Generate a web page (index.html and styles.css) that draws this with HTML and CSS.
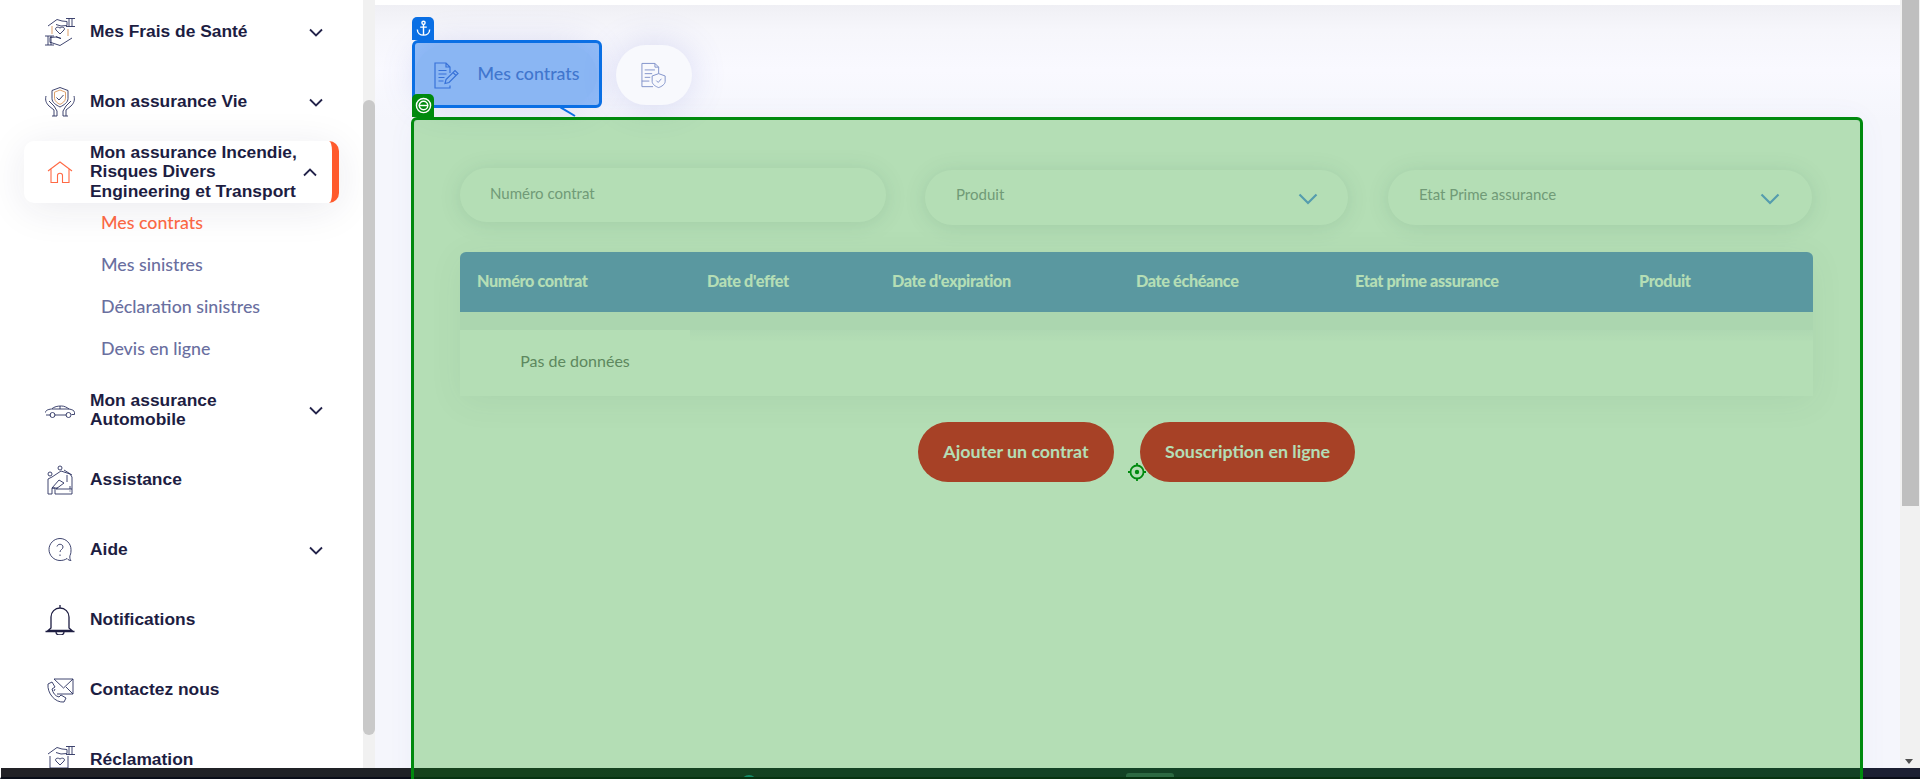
FILE: index.html
```html
<!DOCTYPE html>
<html lang="fr">
<head>
<meta charset="utf-8">
<title>Mes contrats</title>
<link rel="stylesheet" href="styles.css">
</head>
<body>
<div class="app">
  <div class="shell">
    <aside class="sidebar">
      <nav class="nav">
        <a class="item">
          <svg class="ico" viewBox="0 0 30 30"><path d="M3 9 12 2.500l5 1.500 5 .5v4l-6 .5-5-1.500M24 1.500v8M27 1.500v8M21 1.500h9M21 9.500h9" class="ln"/><path d="M27 21l-12 7.500-9-3-1 0v-5l6-.5 5 1.500-5-2M6 19v9M3 19v9M0 19h9M0 28h9" class="ln"/><path d="M15 17l-4-4c-1.500-2 1-4 4-2 3-2 5.500 0 4 2z" class="ln"/><path d="M7 9v8M23 12v7" class="acc"/></svg>
          <span class="label">Mes Frais de Santé</span>
          <svg class="chev" viewBox="0 0 14 9"><path d="M1 1.500 7 7.500 13 1.500"/></svg>
        </a>
        <a class="item">
          <svg class="ico" viewBox="0 0 30 30"><path d="M15 .5 23 3.500v8c0 4-4 6.500-8 8.500-4-2-8-4.500-8-8.500v-8z" class="ln"/><path d="M15 3 20.500 5.200v6c0 3-3 5-5.500 6.200-2.500-1.200-5.500-3.200-5.500-6.200v-6z" class="acc"/><path d="M11.500 10.500 14 13l4.500-5M1 9c-1 4 0 7 3 10l5 4v6M29 9c1 4 0 7-3 10l-5 4v6M4 14l5 5 3 5v5H7M26 14l-5 5-3 5v5h5" class="ln"/></svg>
          <span class="label">Mon assurance Vie</span>
          <svg class="chev" viewBox="0 0 14 9"><path d="M1 1.500 7 7.500 13 1.500"/></svg>
        </a>
        <a class="item item-active">
          <svg class="ico" viewBox="0 0 30 30"><path d="M3 14 15 5 27 14M6 12v13.500h6.500V18.500c0-3 5-3 5 0v7H24V12" class="home"/></svg>
          <span class="label">Mon assurance Incendie,<br>Risques Divers<br>Engineering et Transport</span>
          <svg class="chev" viewBox="0 0 14 9"><path d="M1 7.500 7 1.500 13 7.500"/></svg>
        </a>
        <div class="sub">
          <a class="sub-link sub-link-active">Mes contrats</a>
          <a class="sub-link">Mes sinistres</a>
          <a class="sub-link">Déclaration sinistres</a>
          <a class="sub-link">Devis en ligne</a>
        </div>
        <a class="item">
          <svg class="ico" viewBox="0 0 30 30"><path d="M.5 17.500c0-2 2-3 6-3.500 3-2.500 6-3 10-3 3 0 5.500 1.500 7.500 3 3 .5 5.500 1.500 5.500 3.500v2h-3M6 20H1M9.500 20h12" class="ln"/><circle cx="7.500" cy="20" r="2.500" class="ln"/><circle cx="23.500" cy="20" r="2.500" class="ln"/><path d="M7 14h17M15 11v3" class="ln"/></svg>
          <span class="label">Mon assurance<br>Automobile</span>
          <svg class="chev" viewBox="0 0 14 9"><path d="M1 1.500 7 7.500 13 1.500"/></svg>
        </a>
        <a class="item">
          <svg class="ico" viewBox="0 0 30 30"><circle cx="5" cy="9" r="2" class="ln"/><circle cx="15" cy="3" r="2" class="ln"/><path d="M3 29V14l4-2 9-6 9 3 2 3v17H10v-6H7v6zM7 23l7-8 5 3-8 6M19 5l8 5M22 10v7" class="ln"/><path d="M25 21v3M25 25.500v1" class="ln"/><path d="M7 23h6M11 24h16" class="ln"/></svg>
          <span class="label">Assistance</span>
        </a>
        <a class="item">
          <svg class="ico" viewBox="0 0 30 30"><path d="M15 3.500c-6 0-11 5-11 11s5 11 11 11c2.500 0 5-.5 7-2 1 1.500 3 2 4 2-1-1-1.500-3-1-5 1-2 1-4 1-6 0-6-5-11-11-11z" class="ln"/><path d="M12 11.500c.5-3 6-3 6 .5 0 2.500-3 2.500-3 5M15 19.500v1.500" class="ln"/></svg>
          <span class="label">Aide</span>
          <svg class="chev" viewBox="0 0 14 9"><path d="M1 1.500 7 7.500 13 1.500"/></svg>
        </a>
        <a class="item">
          <svg class="ico" viewBox="0 0 30 30"><path d="M15 0v3M6 23V12c0-5 4-9 9-9s9 4 9 9v11l3 2.500H3zM.5 26.500h29M11 27c0 4 8 4 8 0" class="bell"/></svg>
          <span class="label">Notifications</span>
        </a>
        <a class="item">
          <svg class="ico" viewBox="0 0 30 30"><path d="M9 4h19v15H12M9 4l9.500 9L28 4M10 14l-1 2M21 12l7 7" class="ln"/><path d="M3 9l4-2 3 5-3 2c1 4 3 7 7 8l2-2 5 3-2 4c-9 1-17-9-16-18z" class="ln"/></svg>
          <span class="label">Contactez nous</span>
        </a>
        <a class="item">
          <svg class="ico" viewBox="0 0 30 30"><path d="M3 9 12 2.500l5 1.500 5 .5v4l-6 .5-5-1.500M24 1.500v8M27 1.500v8M21 1.500h9M21 9.500h9" class="ln"/><path d="M5 11v12h18V11" class="ln"/><path d="M15 20l-4-4c-1.500-2 1-4 4-2 3-2 5.500 0 4 2z" class="ln"/></svg>
          <span class="label">Réclamation</span>
        </a>
      </nav>
    </aside>
    <div class="side-track"><div class="side-thumb"></div></div>

    <main class="content">
      <div class="top-strip"></div>
      <div class="tabs">
        <button class="tab tab-active">
          <svg class="tab-ico tab-ico-lg" viewBox="0 0 28 28"><path d="M17 24v2.500H2V1.500h11l4 4v6M13 1.500v4h4M5.500 9h8M5.500 12.500h8M5.500 16h6M5.500 19.500h5" class="tab-ln"/><path d="M12 22l1-4 9-9 3 3-9 9zM20 11l3 3" class="tab-ln"/></svg>
          <span>Mes contrats</span>
        </button>
        <button class="tab tab-icon">
          <svg class="tab-ico" viewBox="0 0 28 28"><path d="M13 26H1V1h14l4 4v7M15 1v4h4M4 8h11M4 12h8M4 16h6M1 20h8" class="tab-ln2"/><path d="M19 12l7 2.500v6c0 3-4 5.500-7 6.500-3-1-7-3.500-7-6.500v-6z" class="tab-ln2"/><path d="M16.500 19.500l2 2 3.500-4" class="tab-ln2"/></svg>
        </button>
      </div>

      <section class="card">
        <div class="filters">
          <div class="field field-input">Numéro contrat</div>
          <div class="field field-select field-mid">
            <span>Produit</span>
            <svg class="sel-chev" viewBox="0 0 20 12"><path d="M1.500 1.500 10 10l8.500-8.500"/></svg>
          </div>
          <div class="field field-select field-last">
            <span>Etat Prime assurance</span>
            <svg class="sel-chev" viewBox="0 0 20 12"><path d="M1.500 1.500 10 10l8.500-8.500"/></svg>
          </div>
        </div>

        <div class="table">
          <div class="thead">
            <div class="th">Numéro contrat</div>
            <div class="th">Date d'effet</div>
            <div class="th">Date d'expiration</div>
            <div class="th">Date échéance</div>
            <div class="th">Etat prime assurance</div>
            <div class="th">Produit</div>
          </div>
          <div class="tbody">
            <div class="td">Pas de données</div>
          </div>
        </div>

        <div class="actions">
          <button class="btn btn-add">Ajouter un contrat</button>
          <button class="btn btn-sub">Souscription en ligne</button>
        </div>
      </section>
    </main>

    <div class="page-track">
      <div class="page-thumb"></div>
      <div class="page-arrow"></div>
    </div>
  </div>

  <footer class="footer">
    <span class="foot-dome"></span>
    <span class="foot-box"></span>
  </footer>

  <div class="ov-green"></div>
  <div class="ov-blue"></div>
  <svg class="ov-link" viewBox="0 0 16 10"><path d="M0 0 15 9"/></svg>
  <div class="badge badge-blue">
    <svg viewBox="0 0 16 18"><path d="M8 4.500V16M4.500 7.500h7M1.500 10c0 4 3 6 6.500 6s6.500-2 6.500-6" class="badge-ln"/><circle cx="8" cy="3" r="1.700" class="badge-ln"/></svg>
  </div>
  <div class="badge badge-green">
    <svg viewBox="0 0 18 18"><circle cx="9" cy="9" r="7.500" class="badge-ln"/><circle cx="9" cy="9" r="4.500" class="badge-ln"/><path d="M4 9h10" class="badge-ln"/></svg>
  </div>
  <svg class="ov-target" viewBox="0 0 18 18"><circle cx="9" cy="9" r="6.500" class="tg"/><circle cx="9" cy="9" r="2.200" class="tg-dot"/><path d="M9 0v2.500M9 15.500V18M0 9h2.500M15.500 9H18" class="tg"/></svg>
</div>
</body>
</html>
```
FILE: styles.css
```css
* { box-sizing: border-box; }
html, body { margin: 0; height: 100%; overflow: hidden; background: #fff; }
body { font-family: "Lato", "Liberation Sans", sans-serif; }
button { font-family: inherit; border: 0; padding: 0; }

.app { position: relative; height: 779px; overflow: hidden; display: flex; flex-direction: column; }
.shell { flex: 1; min-height: 0; display: flex; }

/* sidebar */
.sidebar { width: 363px; flex: none; background: #fff; overflow: hidden; }
.nav { margin-top: -3px; display: flex; flex-direction: column; }
.item { display: flex; align-items: center; height: 70px; padding: 0 40px 0 45px; flex: none; }
.label { flex: 1; font: 700 17.400px/19.200px "Liberation Sans", Arial, sans-serif; color: #1d1d42; white-space: nowrap; }
.ico { width: 30px; height: 30px; flex: none; margin-right: 15px; fill: none; }
.chev { width: 14px; height: 9px; flex: none; fill: none; stroke: #23234a; stroke-width: 1.800; }
.ln { fill: none; stroke: #2a3160; stroke-width: .9; }
.acc { fill: none; stroke: #d9965c; stroke-width: .9; }
.home { fill: none; stroke: #ff6a45; stroke-width: 1.100; }
.bell { fill: none; stroke: #1d1d42; stroke-width: 1.300; }

.item-active { height: 62px; margin: 4px 24px 0; padding: 0 15px 0 21px; background: #fff; border-right: 7px solid #ff5a2c; border-radius: 10px; box-shadow: 0 6px 40px rgba(30, 30, 80, .09); position: relative; }
.sub { margin: -2px 0 6px; display: flex; flex-direction: column; }
.sub-link { height: 42px; line-height: 43px; padding-left: 101px; font-size: 17.800px; font-weight: 500; color: #6a6f9f; }
.sub-link-active { color: #ff6a45; }

.side-track { width: 12px; flex: none; background: #f1f1f1; padding-top: 100px; }
.side-thumb { height: 635px; background: #c9c9c9; border-radius: 6px; }

/* content */
.content { flex: 1; min-width: 0; background: linear-gradient(180deg, #eeeef3 0, #f6f6fb 30px, #f9f9ff 70px, #f5f6fc 120px); padding-left: 39px; padding-right: 39px; }
.top-strip { height: 5px; margin: 0 -39px; background: #fff; }
.tabs { display: flex; gap: 19px; margin-top: 40px; height: 60px; padding-left: 1px; }
.tab { height: 60px; border-radius: 30px; display: flex; align-items: center; justify-content: center; box-shadow: 0 0 36px rgba(80, 90, 190, .2); }
.tab-active { width: 182px; background: #e6e9f6; gap: 17px; font-size: 17.800px; font-weight: 500; color: #6d7fb6; padding: 0 0 4px 0; }
.tab-icon { width: 76px; background: #f8f9fd; }
.tab-ico { width: 26px; height: 27px; fill: none; }
.tab-ico-lg { width: 28px; height: 29px; margin-top: 4px; }
.tab-ln { fill: none; stroke: #5d79c8; stroke-width: 1.200; }
.tab-ln2 { fill: none; stroke: #7c8fc8; stroke-width: 1; }

.card { margin-top: 15px; height: 700px; background: #fff; padding: 48px 48px 0 46px; border-radius: 6px; box-shadow: 0 0 30px rgba(90, 100, 190, .06); }
.filters { display: flex; height: 84px; align-items: flex-start; }
.field { background: #fff; border-radius: 28px; box-shadow: 0 2px 22px rgba(50, 60, 90, .13); display: flex; align-items: center; font-size: 15px; color: #a0a0a8; }
.field-input { width: 426px; height: 54px; padding: 0 0 5px 30px; }
.field-select { height: 55px; justify-content: space-between; padding: 0 32px 0 31px; margin-top: 2px; }
.field-select span { margin-bottom: 7px; }
.field-mid { width: 423px; margin-left: 39px; padding-right: 30px; }
.field-last { width: 424px; margin-left: 40px; }
.sel-chev { width: 20px; height: 12px; flex: none; fill: none; stroke: #79a3f5; stroke-width: 2.200; margin-top: 3px; }

.table { background: #f3f4f7; border-radius: 6px 6px 0 0; box-shadow: 0 6px 34px rgba(50, 60, 90, .07); }
.thead { display: grid; grid-template-columns: 230px 185px 244px 219px 284px 190px; height: 60px; align-items: center; background: #809ce2; border-radius: 6px 6px 0 0; padding-bottom: 4px; }
.th { padding-left: 17px; font-size: 16.200px; font-weight: 900; color: #fff; letter-spacing: -.35px; }
.tbody { margin-top: 18px; height: 66px; background: linear-gradient(180deg, #f7f7fb, #fff 12px); }
.td { width: 230px; height: 66px; background: #fff; display: flex; align-items: center; justify-content: center; padding-bottom: 5px; font-size: 16px; color: #858585; }

.actions { display: flex; justify-content: center; gap: 26px; margin-top: 26px; }
.btn { height: 60px; border-radius: 30px; background: #ed2135; color: #fff; font-size: 17.800px; font-weight: 700; padding-bottom: 2px; }
.btn-add { width: 196px; }
.btn-sub { width: 215px; }

/* page scrollbar */
.page-track { width: 20px; flex: none; background: #f1f1f1; padding: 0 1px 0 2px; position: relative; }
.page-thumb { height: 506px; background: #bfbfbf; }
.page-arrow { position: absolute; left: 5px; bottom: 4px; width: 0; height: 0; border-left: 4.500px solid transparent; border-right: 4.500px solid transparent; border-top: 5px solid #505050; }

/* footer */
.footer { height: 11px; flex: none; background: linear-gradient(90deg, #222226 0, #1f2226 400px, #1b2233 1000px, #1c2033 100%); border-bottom: 2px solid #0a0e18; border-left: 1px solid #fff; position: relative; overflow: hidden; }
.foot-dome { position: absolute; left: 740px; bottom: -6px; width: 16px; height: 8px; border-radius: 8px 8px 0 0; background: #1d8a92; }
.foot-box { position: absolute; left: 1125px; top: 5px; width: 48px; height: 8px; border-radius: 3px 3px 0 0; background: #3f5a5c; }

/* inspector overlays */
.ov-green { position: absolute; left: 411px; top: 117px; width: 1452px; height: 720px; background: rgba(0, 142, 4, .295); border: 3px solid #008a0e; border-radius: 6px; pointer-events: none; }
.ov-blue { position: absolute; left: 412px; top: 40px; width: 190px; height: 68px; background: rgba(0, 105, 240, .4); border: 3px solid #0a6fe4; border-radius: 6px; pointer-events: none; }
.ov-link { position: absolute; left: 560px; top: 107px; width: 16px; height: 10px; fill: none; stroke: #0a6fe4; stroke-width: 2; }
.badge { position: absolute; left: 412px; width: 22px; height: 23px; display: flex; align-items: center; justify-content: center; border-radius: 5px 5px 0 0; }
.badge svg { width: 17px; height: 17px; }
.badge-blue { top: 17px; background: #0a6fe4; }
.badge-green { top: 94px; background: #008a0e; }
.badge-ln { fill: none; stroke: #fff; stroke-width: 1.500; }
.ov-target { position: absolute; left: 1128px; top: 463px; width: 18px; height: 18px; }
.tg { fill: none; stroke: #008a0e; stroke-width: 1.800; }
.tg-dot { fill: #008a0e; }
```
